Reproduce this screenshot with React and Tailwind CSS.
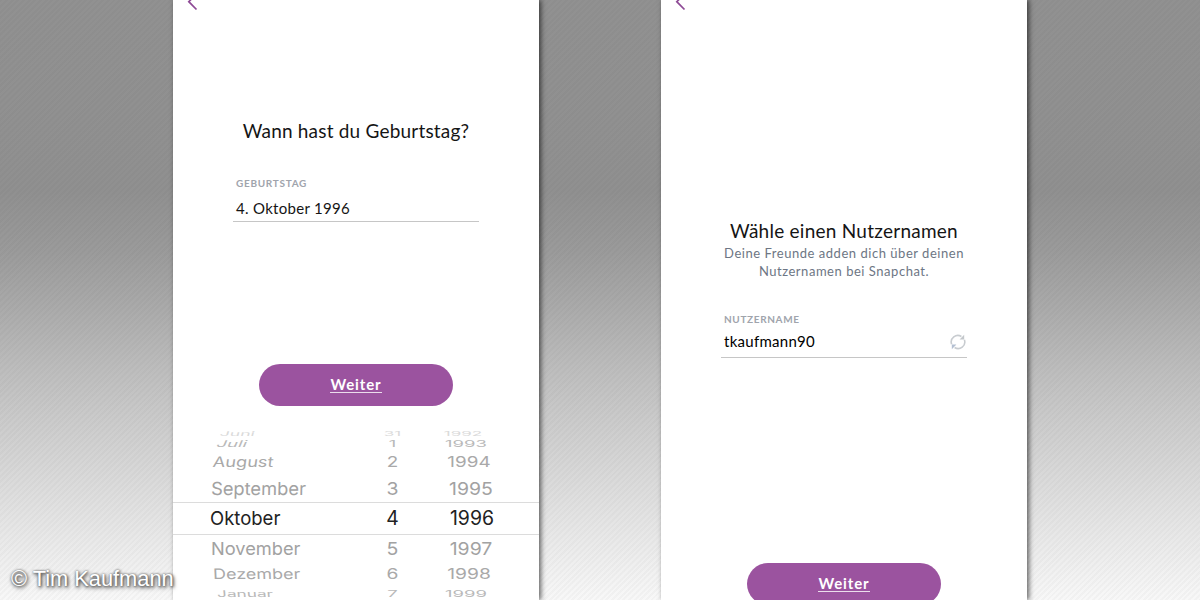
/* ── Picker data ─────────────────────────────────────────────── */

const ROWS = [
  { month: 'Juni', day: '31', year: '1992', row: 'h-[6px] text-[#dadada]', left: 'pl-[47px]', nudge: '-translate-y-[1px]', warp: 'scale-y-[0.36] scale-x-[0.95] -skew-x-6', numWarp: 'scale-y-[0.36] scale-x-[0.92]', yearPos: 'mr-[52px]' },
  { month: 'Juli', day: '1', year: '1993', row: 'h-3 text-[#b9b9b9]', left: 'pl-[44px]', nudge: '', warp: 'scale-y-[0.5] -skew-x-12', numWarp: 'scale-y-[0.5]', yearPos: 'mr-[49px]' },
  { month: 'August', day: '2', year: '1994', row: 'h-[26px] text-[#a9a9a9]', left: 'pl-[40px]', nudge: '', warp: 'scale-y-[0.78] scale-x-[0.98] -skew-x-6', numWarp: 'scale-y-[0.78] scale-x-[1.02]', yearPos: 'mr-[46px]' },
  { month: 'September', day: '3', year: '1995', row: 'h-[27px] text-[#a2a2a2]', left: 'pl-[38px]', nudge: '-translate-y-[1px]', warp: 'scale-y-[0.97] scale-x-[0.99] -skew-x-1', numWarp: 'scale-y-[0.97] scale-x-[1.05]', yearPos: 'mr-[44px]' },
  { month: 'Oktober', day: '4', year: '1996', row: 'h-[33px] border-y border-[#dcdcdc] text-[#222]', left: 'pl-[37px]', nudge: '-translate-y-[1px]', warp: 'scale-y-[1.03]', numWarp: 'scale-[1.05]', yearPos: 'mr-[43px]' },
  { month: 'November', day: '5', year: '1997', row: 'h-[26px] text-[#a2a2a2]', left: 'pl-[38px]', nudge: '', warp: 'scale-y-[0.97] scale-x-[0.985]', numWarp: 'scale-y-[0.97] scale-x-[1.05]', yearPos: 'mr-[44px]' },
  { month: 'Dezember', day: '6', year: '1998', row: 'h-[26px] text-[#a9a9a9]', left: 'pl-[40px]', nudge: '', warp: 'scale-y-[0.78] scale-x-[0.97] skew-x-2', numWarp: 'scale-y-[0.78] scale-x-[1.04]', yearPos: 'mr-[46px]' },
  { month: 'Januar', day: '7', year: '1999', row: 'h-[13px] text-[#b9b9b9]', left: 'pl-[44px]', nudge: '-translate-y-[1px]', warp: 'scale-y-[0.5] scale-x-[0.93] skew-x-3', numWarp: 'scale-y-[0.5]', yearPos: 'mr-[49px]' },
]

function PickerRow({ item }) {
  return (
    <div className={`flex shrink-0 items-center overflow-hidden ${item.row}`}>
      <div className={`w-[208px] ${item.left}`}>
        <span className={`block w-fit origin-left ${item.nudge} ${item.warp}`}>{item.month}</span>
      </div>
      <div className="w-[23px] text-center">
        <span className={`block ${item.nudge} ${item.numWarp}`}>{item.day}</span>
      </div>
      <div className={`ml-auto w-[48px] text-center ${item.yearPos}`}>
        <span className={`block ${item.nudge} ${item.numWarp}`}>{item.year}</span>
      </div>
    </div>
  )
}

function DatePicker() {
  return (
    <div className="mt-[25px] flex shrink-0 flex-col font-['Inter',sans-serif] text-[18.5px] leading-6 whitespace-nowrap">
      {ROWS.map(item => (
        <PickerRow key={item.month} item={item} />
      ))}
    </div>
  )
}

/* ── Shared parts ────────────────────────────────────────────── */

function Screen({ children }) {
  return (
    <section className="flex h-[600px] w-[366px] shrink-0 flex-col overflow-hidden bg-white shadow-[2px_0_5px_rgba(0,0,0,0.6)]">
      <svg className="ml-[14px] h-3 w-3 shrink-0" viewBox="0 0 12 12" fill="none" stroke="#8e4a96" strokeWidth="1.7">
        <path d="M9.5 -6 L1.8 1.7 L9.5 9.5" />
      </svg>
      {children}
    </section>
  )
}

function NextButton({ className }) {
  return (
    <button className={`mx-auto h-[42px] w-[194px] shrink-0 rounded-full bg-[#9b539f] pb-[2px] text-[15px] leading-5 font-bold tracking-[0.9px] text-white ${className}`}>
      <span className="inline-block h-[18px] border-b border-white/80 leading-[18px]">Weiter</span>
    </button>
  )
}

function RefreshIcon() {
  return (
    <svg className="mt-[2px] mr-[1px] h-4 w-4" viewBox="0 0 16 16" fill="none" stroke="#c8ccd0" strokeWidth="1.6">
      <path d="M1.6 10.2 A6.6 6.6 0 0 1 11.4 2.5" />
      <path d="M14.4 5.8 A6.6 6.6 0 0 1 4.6 13.5" />
      <path d="M14.2 0.8 V5.4 H9.6 Z" fill="#c3c7cb" stroke="none" />
      <path d="M1.8 15.2 V10.6 H6.4 Z" fill="#b4c0d2" stroke="none" />
    </svg>
  )
}

/* ── Page ────────────────────────────────────────────────────── */

export default function App() {
  return (
    <main className="relative flex h-[600px] w-[1200px] gap-[122px] overflow-hidden bg-[repeating-linear-gradient(135deg,rgba(0,0,0,0.025)_0px,rgba(0,0,0,0.025)_2px,transparent_2px,transparent_4px),linear-gradient(180deg,#919191_0%,#909090_32%,#9b9b9b_42%,#aaaaaa_51%,#bcbcbc_61%,#cbcbcb_70%,#dadada_80%,#e9e9e9_90%,#f8f8f8_100%)] pl-[173px] font-['Lato',sans-serif] text-[#151515]">
      <Screen>
        <h1 className="mt-[105px] text-center text-[19px] leading-7 tracking-[0.2px]">Wann hast du Geburtstag?</h1>
        <div className="mx-[60px] mt-[32px] h-[45px] shrink-0 border-b border-[#c6c6c6] pl-[3px]">
          <p className="text-[10px] leading-3 font-bold tracking-[0.7px] text-[#a0a4ac]">GEBURTSTAG</p>
          <p className="mt-[9px] text-[15px] leading-5 tracking-[0.3px]">4. Oktober 1996</p>
        </div>
        <NextButton className="mt-[142px]" />
        <DatePicker />
      </Screen>

      <Screen>
        <h1 className="mt-[205px] text-center text-[19px] leading-7 tracking-[0.25px]">Wähle einen Nutzernamen</h1>
        <p className="-mt-px text-center text-[13px] leading-[18px] tracking-[0.53px] text-[#6d7684]">
          Deine Freunde adden dich über deinen<br />
          Nutzernamen bei Snapchat.
        </p>
        <div className="mx-[60px] mt-[33px] h-[45px] shrink-0 border-b border-[#c6c6c6] pl-[3px]">
          <p className="text-[10px] leading-3 font-bold tracking-[0.65px] text-[#a0a4ac]">NUTZERNAME</p>
          <div className="mt-[6px] flex items-center justify-between">
            <p className="text-[15px] leading-5 tracking-[0.28px] text-black">tkaufmann90</p>
            <RefreshIcon />
          </div>
        </div>
        <NextButton className="mt-[205px]" />
      </Screen>

      <p className="absolute top-[567px] left-[11px] font-['Liberation_Sans',sans-serif] text-[21.8px] leading-6 whitespace-nowrap text-white [text-shadow:0_0_2px_#666,1px_1px_3px_#555,1px_2px_4px_#666]">
        © Tim Kaufmann
      </p>
    </main>
  )
}
